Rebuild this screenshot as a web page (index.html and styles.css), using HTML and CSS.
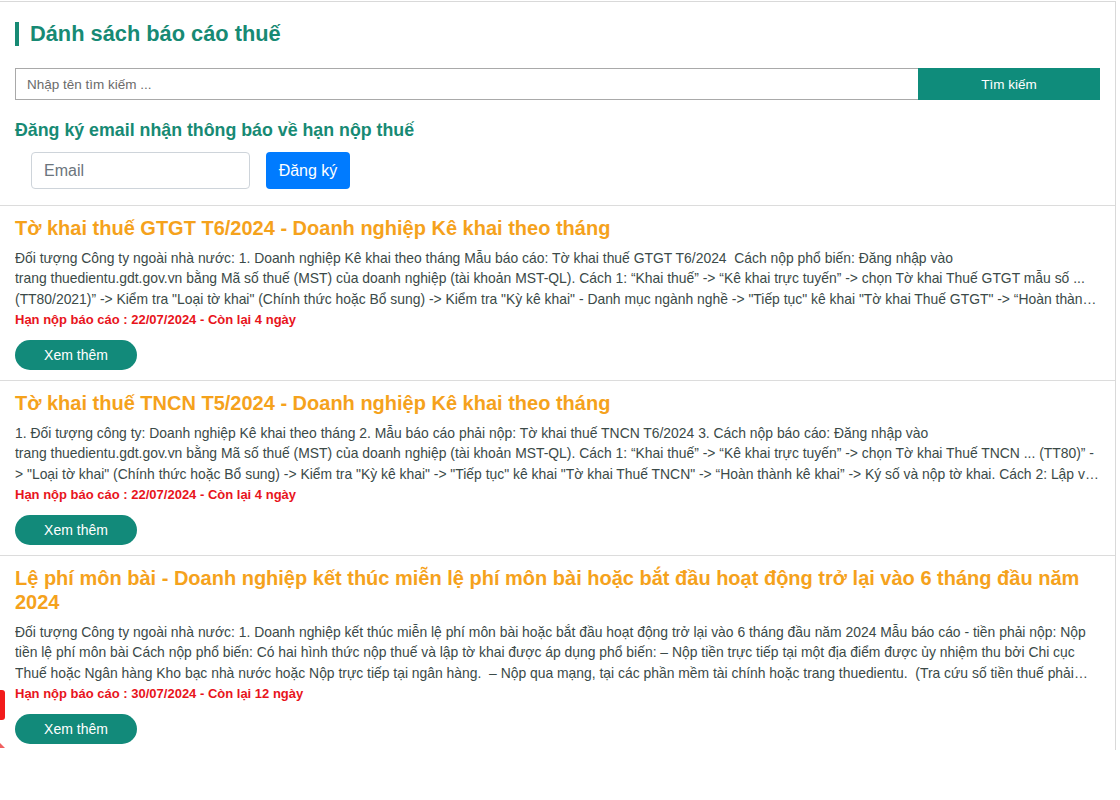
FILE: index.html
```html
<!DOCTYPE html>
<html lang="vi">
<head>
<meta charset="utf-8">
<title>Dánh sách báo cáo thuế</title>
<link rel="stylesheet" href="styles.css">
</head>
<body>
<div class="page">
  <div class="top">
    <h1 class="page-title">Dánh sách báo cáo thuế</h1>
    <form class="search">
      <input class="search-input" type="text" placeholder="Nhập tên tìm kiếm ...">
      <button class="search-btn" type="button">Tìm kiếm</button>
    </form>
    <h2 class="sub-title">Đăng ký email nhận thông báo về hạn nộp thuế</h2>
    <div class="subscribe">
      <input class="email-input" type="text" placeholder="Email">
      <button class="email-btn" type="button">Đăng ký</button>
    </div>
  </div>

  <div class="item">
    <h3 class="item-title">Tờ khai thuế GTGT T6/2024 - Doanh nghiệp Kê khai theo tháng</h3>
    <p class="item-desc">Đối tượng Công ty ngoài nhà nước: 1. Doanh nghiệp Kê khai theo tháng Mẫu báo cáo: Tờ khai thuế GTGT T6/2024&nbsp; Cách nộp phổ biến: Đăng nhập vào<br>trang thuedientu.gdt.gov.vn bằng Mã số thuế (MST) của doanh nghiệp (tài khoản MST-QL). Cách 1: “Khai thuế” -&gt; “Kê khai trực tuyến” -&gt; chọn Tờ khai Thuế GTGT mẫu số ... (TT80/2021)” -&gt; Kiểm tra "Loại tờ khai" (Chính thức hoặc Bổ sung) -&gt; Kiểm tra "Kỳ kê khai" - Danh mục ngành nghề -&gt; "Tiếp tục" kê khai "Tờ khai Thuế GTGT" -&gt; “Hoàn thành kê khai”</p>
    <p class="item-deadline">Hạn nộp báo cáo : 22/07/2024 - Còn lại 4 ngày</p>
    <a class="more-btn" href="#">Xem thêm</a>
  </div>

  <div class="item">
    <h3 class="item-title">Tờ khai thuế TNCN T5/2024 - Doanh nghiệp Kê khai theo tháng</h3>
    <p class="item-desc">1. Đối tượng công ty: Doanh nghiệp Kê khai theo tháng 2. Mẫu báo cáo phải nộp: Tờ khai thuế TNCN T6/2024 3. Cách nộp báo cáo: Đăng nhập vào<br>trang thuedientu.gdt.gov.vn bằng Mã số thuế (MST) của doanh nghiệp (tài khoản MST-QL). Cách 1: “Khai thuế” -&gt; “Kê khai trực tuyến” -&gt; chọn Tờ khai Thuế TNCN ... (TT80)” -&gt; "Loại tờ khai" (Chính thức hoặc Bổ sung) -&gt; Kiểm tra "Kỳ kê khai" -&gt; "Tiếp tục" kê khai "Tờ khai Thuế TNCN" -&gt; “Hoàn thành kê khai” -&gt; Ký số và nộp tờ khai. Cách 2: Lập và nộp</p>
    <p class="item-deadline">Hạn nộp báo cáo : 22/07/2024 - Còn lại 4 ngày</p>
    <a class="more-btn" href="#">Xem thêm</a>
  </div>

  <div class="item item-last">
    <h3 class="item-title">Lệ phí môn bài - Doanh nghiệp kết thúc miễn lệ phí môn bài hoặc bắt đầu hoạt động trở lại vào 6 tháng đầu năm 2024</h3>
    <p class="item-desc">Đối tượng Công ty ngoài nhà nước: 1. Doanh nghiệp kết thúc miễn lệ phí môn bài hoặc bắt đầu hoạt động trở lại vào 6 tháng đầu năm 2024 Mẫu báo cáo - tiền phải nộp: Nộp tiền lệ phí môn bài Cách nộp phổ biến: Có hai hình thức nộp thuế và lập tờ khai được áp dụng phổ biến: – Nộp tiền trực tiếp tại một địa điểm được ủy nhiệm thu bởi Chi cục Thuế hoặc Ngân hàng Kho bạc nhà nước hoặc Nộp trực tiếp tại ngân hàng.&nbsp; – Nộp qua mạng, tại các phần mềm tài chính hoặc trang thuedientu.&nbsp; (Tra cứu số tiền thuế phải nộp)</p>
    <p class="item-deadline">Hạn nộp báo cáo : 30/07/2024 - Còn lại 12 ngày</p>
    <a class="more-btn" href="#">Xem thêm</a>
  </div>
</div>
<div class="side-widget"></div>
<div class="side-widget-tip"></div>
</body>
</html>
```

FILE: styles.css
```css
html, body {
  margin: 0;
  padding: 0;
  background: #ffffff;
}

body {
  font-family: "Liberation Sans", Arial, sans-serif;
  color: #3b4a48;
  padding-top: 1px;
  position: relative;
  min-height: 799px;
}

.page {
  width: 1115px;
  border-top: 1px solid #d9d9d9;
  border-right: 1px solid #d9d9d9;
  padding-bottom: 6px;
}

.top {
  padding: 20px 15px 16px 15px;
  border-bottom: 1px solid #dcdcdc;
}

.page-title {
  margin: 0;
  font-size: 21.8px;
  line-height: 24px;
  font-weight: bold;
  color: #178a74;
  border-left: 4px solid #178a74;
  padding-left: 11px;
}

.search {
  display: flex;
  margin: 22px 0 0 0;
  height: 32px;
}

.search-input {
  flex: 1;
  height: 32px;
  box-sizing: border-box;
  border: 1px solid #a9a9a9;
  border-right: none;
  padding: 0 11px;
  font-family: "Liberation Sans", Arial, sans-serif;
  font-size: 13.5px;
  color: #555;
  outline: none;
}

.search-input::placeholder {
  color: #6b6b6b;
}

.search-btn {
  width: 182px;
  height: 32px;
  border: none;
  background: #0f8c7b;
  color: #ffffff;
  font-family: "Liberation Sans", Arial, sans-serif;
  font-size: 13.5px;
  padding: 0;
}

.sub-title {
  margin: 20px 0 0 0;
  font-size: 17.8px;
  line-height: 20px;
  font-weight: bold;
  color: #178a74;
}

.subscribe {
  display: flex;
  gap: 16px;
  margin: 12px 0 0 16px;
}

.email-input {
  width: 219px;
  height: 37px;
  box-sizing: border-box;
  border: 1px solid #ced4da;
  border-radius: 4px;
  padding: 0 12px;
  font-family: "Liberation Sans", Arial, sans-serif;
  font-size: 16px;
  color: #495057;
  outline: none;
}

.email-input::placeholder {
  color: #6c757d;
}

.email-btn {
  width: 84px;
  height: 37px;
  border: none;
  border-radius: 4px;
  background: #007bff;
  color: #ffffff;
  font-family: "Liberation Sans", Arial, sans-serif;
  font-size: 16px;
  padding: 0;
}

.item {
  padding: 10px 15px 10px 15px;
  border-bottom: 1px solid #dcdcdc;
}

.item-last {
  border-bottom: none;
  padding-bottom: 0;
}

.item-title {
  margin: 0;
  font-size: 20px;
  line-height: 24px;
  font-weight: bold;
  color: #f5a21c;
}

.item-desc {
  margin: 8px 0 0 0;
  font-size: 13.9px;
  line-height: 20.33px;
  color: #3b4a48;
  display: -webkit-box;
  -webkit-box-orient: vertical;
  -webkit-line-clamp: 3;
  overflow: hidden;
  max-height: 61px;
}

.item-deadline {
  margin: 1px 0 0 0;
  font-size: 13px;
  line-height: 20px;
  font-weight: bold;
  color: #e8141b;
}

.more-btn {
  display: block;
  margin-top: 10px;
  width: 122px;
  height: 30px;
  line-height: 30px;
  text-align: center;
  border-radius: 15px;
  background: #128a7a;
  color: #ffffff;
  font-size: 14px;
  text-decoration: none;
}

.side-widget {
  position: absolute;
  left: 0;
  top: 690px;
  width: 5px;
  height: 30px;
  background: #f21b1b;
  border-radius: 0 3px 3px 0;
}

.side-widget-tip {
  position: absolute;
  left: 0;
  top: 743px;
  width: 0;
  height: 0;
  border-left: 5px solid #f06060;
  border-top: 5px solid transparent;
}
```
